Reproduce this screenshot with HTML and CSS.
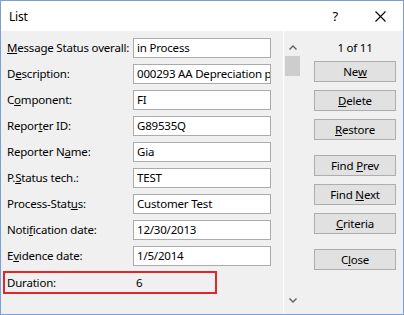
FILE: index.html
```html
<!DOCTYPE html>
<html lang="en">
<head>
    <meta charset="UTF-8">
    <title>List</title>
    <link rel="stylesheet" href="styles.css">
</head>
<body>
    <div class="window">
        <div class="title-bar">
            <span class="title">List</span>
            <span class="help">?</span>
            <svg class="close-x" width="11" height="11" viewBox="0 0 11 11">
                <path d="M0.5 0.5 L10.5 10.5 M10.5 0.5 L0.5 10.5" stroke="#000" stroke-width="1.1" fill="none"/>
            </svg>
        </div>

        <div class="content">
            <div class="form">
                <label class="field-label"><u>M</u>essage Status overall:</label>
                <div class="field">in Process</div>
                <label class="field-label">D<u>e</u>scription:</label>
                <div class="field">000293 AA Depreciation p</div>
                <label class="field-label">C<u>o</u>mponent:</label>
                <div class="field">FI</div>
                <label class="field-label">Repor<u>t</u>er ID:</label>
                <div class="field">G89535Q</div>
                <label class="field-label">Reporter N<u>a</u>me:</label>
                <div class="field">Gia</div>
                <label class="field-label">P.<u>S</u>tatus tech.:</label>
                <div class="field">TEST</div>
                <label class="field-label">Process-Stat<u>u</u>s:</label>
                <div class="field">Customer Test</div>
                <label class="field-label">Noti<u>f</u>ication date:</label>
                <div class="field">12/30/2013</div>
                <label class="field-label">E<u>v</u>idence date:</label>
                <div class="field">1/5/2014</div>

                <div class="duration">
                    <span class="duration-label">Duration:</span>
                    <span class="duration-value">6</span>
                </div>
            </div>

            <div class="scrollbar">
                <svg class="arrow" width="8" height="5" viewBox="0 0 8 5">
                    <path d="M0.5 4.5 L4 1 L7.5 4.5" stroke="#606060" stroke-width="1.4" fill="none"/>
                </svg>
                <div class="thumb"></div>
                <div class="track"></div>
                <svg class="arrow" width="8" height="5" viewBox="0 0 8 5">
                    <path d="M0.5 0.5 L4 4 L7.5 0.5" stroke="#606060" stroke-width="1.4" fill="none"/>
                </svg>
            </div>

            <div class="actions">
                <div class="counter">1 of 11</div>
                <button>Ne<u>w</u></button>
                <button><u>D</u>elete</button>
                <button><u>R</u>estore</button>
                <button class="group-start">Find <u>P</u>rev</button>
                <button>Find <u>N</u>ext</button>
                <button><u>C</u>riteria</button>
                <button class="group-start">C<u>l</u>ose</button>
            </div>
        </div>
    </div>
</body>
</html>
```

FILE: styles.css
```css
* {
    box-sizing: border-box;
}

body {
    margin: 0;
    font-family: "Noto Sans", "Open Sans", sans-serif;
    font-size: 11.5px;
    letter-spacing: -0.2px;
    color: #000;
}

.window {
    width: 404px;
    height: 315px;
    border: 1px solid #7a9fd4;
    background: #f0f0f0;
    display: flex;
    flex-direction: column;
}

.title-bar {
    height: 30px;
    background: #fff;
    display: flex;
    align-items: center;
    padding: 0 17px 0 8px;
}

.title {
    flex: 1;
    font-size: 12px;
}

.help {
    font-size: 13px;
    margin-right: 37px;
}

.close-x {
    display: block;
}

.content {
    flex: 1;
    display: flex;
}

.form {
    width: 282px;
    padding: 7px 0 0 6px;
    display: grid;
    grid-template-columns: 126px 138px;
    grid-auto-rows: 20px;
    row-gap: 6px;
    align-content: start;
}

.field-label {
    line-height: 20px;
    white-space: nowrap;
}

.field {
    border: 1px solid #ababab;
    background: #fff;
    padding: 0 3px;
    line-height: 18px;
    white-space: nowrap;
    overflow: hidden;
}

.duration {
    grid-column: 1 / -1;
    display: flex;
    align-items: center;
    width: 214px;
    height: 23px;
    margin: -1px 0 0 -4px;
    padding-left: 2px;
    border: 2px solid #e3262e;
}

.duration-label {
    width: 129px;
}

.scrollbar {
    width: 18px;
    border-left: 1px solid #fff;
    display: flex;
    flex-direction: column;
    align-items: center;
    padding: 14px 0 11px;
}

.arrow {
    display: block;
    flex: none;
}

.thumb {
    width: 15px;
    height: 20px;
    margin-top: 6px;
    background: #cdcdcd;
}

.track {
    flex: 1;
}

.actions {
    flex: 1;
    padding: 9px 0 0 13px;
    display: flex;
    flex-direction: column;
}

.counter {
    width: 82px;
    text-align: center;
    line-height: 16px;
    margin-bottom: 5px;
}

button {
    width: 82px;
    height: 21px;
    margin-bottom: 8px;
    padding: 0;
    font-family: inherit;
    font-size: inherit;
    letter-spacing: inherit;
    color: #000;
    background: #e1e1e1;
    border: 1px solid #adadad;
}

.group-start {
    margin-top: 7px;
}
```
